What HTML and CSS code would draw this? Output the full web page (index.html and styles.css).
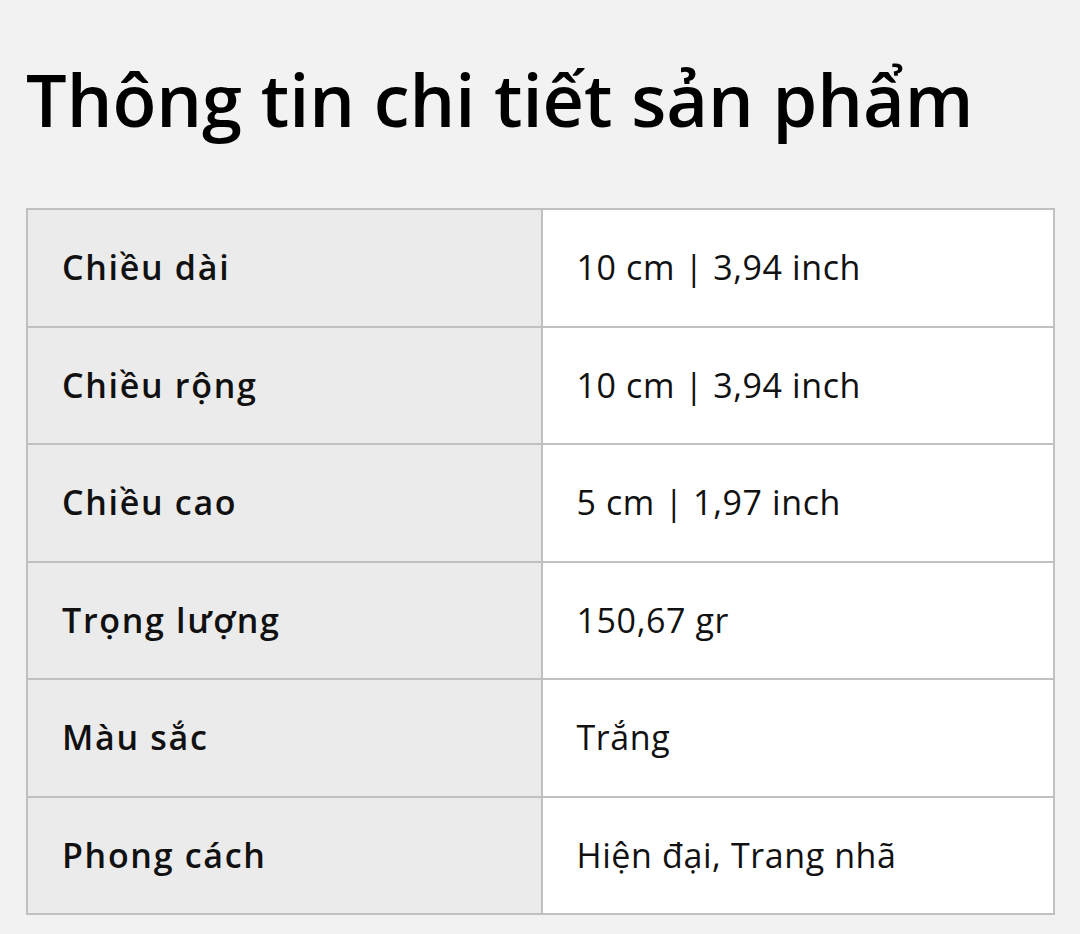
FILE: index.html
```html
<!DOCTYPE html>
<html lang="vi">
<head>
<meta charset="utf-8">
<title>Thông tin chi tiết sản phẩm</title>
<link rel="stylesheet" href="styles.css">
</head>
<body>
<main class="page">
  <h1 class="title">Thông tin chi tiết sản phẩm</h1>
  <table class="specs">
    <colgroup><col class="col-label"><col class="col-value"></colgroup>
    <tbody>
      <tr><th class="label">Chiều dài</th><td class="value">10 cm | 3,94 inch</td></tr>
      <tr><th class="label">Chiều rộng</th><td class="value">10 cm | 3,94 inch</td></tr>
      <tr><th class="label">Chiều cao</th><td class="value">5 cm | 1,97 inch</td></tr>
      <tr><th class="label">Trọng lượng</th><td class="value">150,67 gr</td></tr>
      <tr><th class="label">Màu sắc</th><td class="value">Trắng</td></tr>
      <tr><th class="label">Phong cách</th><td class="value">Hiện đại, Trang nhã</td></tr>
    </tbody>
  </table>
</main>
</body>
</html>
```
FILE: styles.css
```css
html, body {
  margin: 0;
  padding: 0;
  background: #f2f2f2;
}
body {
  font-family: "Open Sans", "Noto Sans", sans-serif;
  color: #111;
}
.page {
  padding: 56px 25px 0 26px;
}
.title {
  margin: 0 0 66px 0;
  font-size: 72px;
  line-height: 86px;
  font-weight: 600;
  color: #000;
  letter-spacing: 0;
}
.specs {
  width: 1029px;
  border-collapse: collapse;
  table-layout: fixed;
  border: 2px solid #c0c0c0;
}
.col-label { width: 50.1%; }
.col-value { width: 49.9%; }
.specs th, .specs td {
  border: 2px solid #c0c0c0;
  padding: 40px 34px 40.5px;
  line-height: 35px;
  font-size: 34px;
  text-align: left;
  vertical-align: middle;
}
.label {
  background: #ebebeb;
  font-weight: 600;
  letter-spacing: 1.7px;
  color: #111;
}
.value {
  background: #fff;
  font-weight: 400;
  letter-spacing: 0.6px;
  color: #111;
}
```
